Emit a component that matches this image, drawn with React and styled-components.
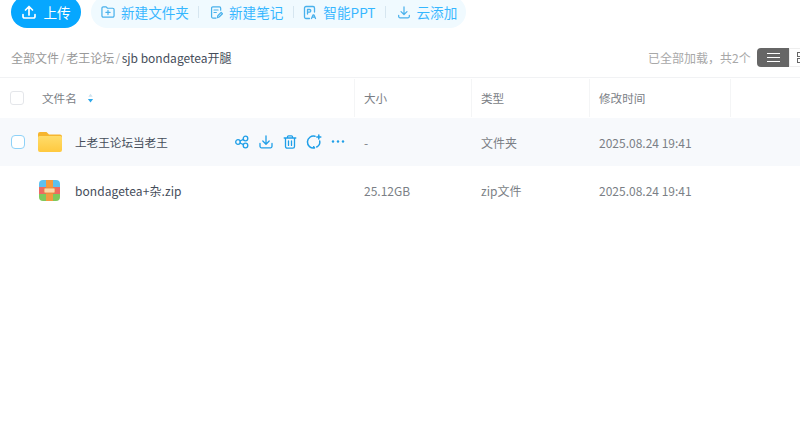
import React from "react";
import styled, { createGlobalStyle } from "styled-components";

const Global = createGlobalStyle`
  html, body { margin: 0; padding: 0; background: #fff; overflow: hidden; }
  body { font-family: "Noto Sans CJK SC", "Noto Sans", sans-serif; }
  #root { width: 800px; height: 427px; overflow: hidden; }
`;

const Page = styled.div`
  width: 800px;
  height: 427px;
  overflow: hidden;
  background: #fff;
`;

const Toolbar = styled.div`
  display: flex;
  align-items: center;
  height: 32px;
  margin-top: -4px;
  padding-left: 11px;
  gap: 10px;
`;

const UploadButton = styled.div`
  display: flex;
  align-items: center;
  justify-content: center;
  gap: 6px;
  width: 70px;
  height: 32px;
  border-radius: 16px;
  background: #06a7ff;
  color: #fff;
  font-size: 13.6px;
  font-weight: 400;
`;

const ActionGroup = styled.div`
  display: flex;
  align-items: center;
  width: 375px;
  height: 32px;
  box-sizing: border-box;
  padding-left: 10px;
  border-radius: 16px;
  background: #f0faff;
`;

const Action = styled.div`
  display: flex;
  align-items: center;
  gap: 6px;
  color: #06a7ff;
  font-size: 13.6px;
  white-space: nowrap;
  opacity: 0.8;
`;

const Sep = styled.span`
  width: 1px;
  height: 12px;
  margin: 0 ${(p) => p.$r}px 0 ${(p) => p.$l}px;
  background: #d6e6f0;
`;

const InfoBar = styled.div`
  display: flex;
  align-items: center;
  justify-content: space-between;
  height: 20px;
  margin-top: 19px;
  padding-left: 11px;
`;

const Crumbs = styled.div`
  display: flex;
  font-size: 12px;
  color: #999;
  white-space: nowrap;
`;

const CrumbSep = styled.span`
  margin: 0 1.5px;
  font-size: 11px;
  color: #aaa;
`;

const CrumbCurrent = styled.span`
  color: #454d5a;
`;

const InfoRight = styled.div`
  display: flex;
  align-items: center;
  flex-shrink: 0;
  width: 152px;
`;

const Loaded = styled.span`
  flex-shrink: 0;
  font-size: 12px;
  color: #a8a8a8;
  width: 109px;
  white-space: nowrap;
`;

const ToggleOn = styled.div`
  display: flex;
  flex-shrink: 0;
  align-items: center;
  justify-content: center;
  width: 32px;
  height: 19px;
  border-radius: 4px 0 0 4px;
  background: #666;
`;

const ToggleOff = styled.div`
  display: flex;
  flex-shrink: 0;
  align-items: center;
  padding-left: 7px;
  width: 10px;
  height: 17px;
  border: 1px solid #eee;
  border-right: 0;
`;

const Table = styled.div`
  margin-top: 10px;
  border-top: 1px solid #f1f2f4;
`;

const cols = "355px 117px 118px 141px 70px";

const HeaderRow = styled.div`
  display: grid;
  grid-template-columns: ${cols};
  height: 40px;
  align-items: stretch;
`;

const Row = styled.div`
  display: grid;
  grid-template-columns: ${cols};
  height: 48px;
  align-items: center;
  background: ${(p) => (p.$active ? "#f7f9fc" : "#fff")};
`;

const HeadCell = styled.div`
  display: flex;
  align-items: center;
  box-sizing: border-box;
  padding: 0 0 1px ${(p) => (p.$first ? 10 : 9)}px;
  font-size: 11.6px;
  color: #7a7e85;
  border-right: ${(p) => (p.$open ? "0" : "1px solid #f4f5f6")};
  margin: 1px 0;
`;

const Cell = styled.div`
  padding-left: 9px;
  font-size: 12px;
  color: #7b7f86;
  white-space: nowrap;
`;

const NameCell = styled.div`
  display: flex;
  align-items: center;
  height: 100%;
  padding-left: 10px;
  font-size: 11.6px;
  color: #454d5a;
  white-space: nowrap;
  position: relative;
`;

const ZipName = styled.span`
  font-size: 12px;
  letter-spacing: 0.08px;
`;

const Check = styled.span`
  display: block;
  flex-shrink: 0;
  width: 12px;
  height: 12px;
  margin: 0 ${(p) => (p.$blue ? -1 : 0)}px 0 ${(p) => (p.$blue ? 1 : 0)}px;
  border-radius: ${(p) => (p.$blue ? 4 : 3)}px;
  border: 1px solid ${(p) => (p.$blue ? "#8fd2f8" : "#e4e6ea")};
  background: #fff;
  visibility: ${(p) => (p.$hidden ? "hidden" : "visible")};
`;

const HeadLabel = styled.span`
  margin-left: 18px;
`;

const Sort = styled.svg`
  margin-left: 10px;
`;

const IconSlot = styled.span`
  display: flex;
  justify-content: center;
  width: 25px;
  margin-left: 13px;
  margin-right: 13px;
`;

const RowActions = styled.div`
  position: absolute;
  left: 234px;
  top: 16px;
  display: flex;
  gap: 8px;
`;

const Up = () => (
  <svg width="16" height="16" viewBox="0 0 16 16" fill="none" stroke="#fff" strokeWidth="1.7" strokeLinecap="round" strokeLinejoin="round">
    <path d="M8 11V2.5M4.5 6 8 2.5 11.5 6M2 10.5v2A1.5 1.5 0 0 0 3.5 14h9a1.5 1.5 0 0 0 1.5-1.5v-2" />
  </svg>
);

const stroke = { fill: "none", stroke: "#1f9fe8", strokeWidth: 1.3, strokeLinecap: "round", strokeLinejoin: "round" };

const NewFolder = () => (
  <svg width="14" height="14" viewBox="0 0 15 14" {...stroke}>
    <path d="M1 3a1.5 1.5 0 0 1 1.5-1.5h3L7 3h5.5A1.5 1.5 0 0 1 14 4.5v6.5a1.5 1.5 0 0 1-1.5 1.5h-10A1.5 1.5 0 0 1 1 11z" />
    <path d="M7.5 5.3v4.4M5.3 7.5h4.4" />
  </svg>
);
const NewNote = () => (
  <svg width="13" height="15" viewBox="0 0 14 15" {...stroke}>
    <path d="M11.5 5V2.8A1.3 1.3 0 0 0 10.2 1.5H3A1.3 1.3 0 0 0 1.7 2.8v9.4A1.3 1.3 0 0 0 3 13.5h3.5" />
    <path d="M4.3 4.8h4.4M4.3 7.5h2.5M8 13l.4-2 3.6-3.6 1.4 1.4-3.6 3.6z" />
  </svg>
);
const Ppt = () => (
  <svg width="14" height="15" viewBox="0 0 14 15" {...stroke}>
    <path d="M6.5 13.5H3A1.5 1.5 0 0 1 1.5 12V3A1.5 1.5 0 0 1 3 1.5h7A1.5 1.5 0 0 1 11.5 3v4" />
    <path d="M4.5 9V4.5h2a1.2 1.2 0 0 1 0 2.6h-2" />
    <path d="M8.5 13.5l1.5-3.5h1l1.5 3.5M9.5 12.2h2.2" />
  </svg>
);
const CloudAdd = () => (
  <svg width="14" height="15" viewBox="0 0 15 15" {...stroke}>
    <path d="M7.5 1.5V9.5M4.3 6.5l3.2 3.2 3.2-3.2M1.8 10.5v1.2a1.5 1.5 0 0 0 1.5 1.5h8.4a1.5 1.5 0 0 0 1.5-1.5v-1.2" />
  </svg>
);

const Share = () => (
  <svg width="16" height="16" viewBox="0 0 16 16" {...stroke}>
    <circle cx="4" cy="8" r="2.3" />
    <circle cx="11.5" cy="4.5" r="2.3" />
    <circle cx="11.5" cy="11.5" r="2.3" />
    <path d="M6 7l3.5-1.6M6 9l3.5 1.6" />
  </svg>
);
const Download = () => (
  <svg width="16" height="16" viewBox="0 0 16 16" {...stroke}>
    <path d="M8 1.8v8M4.8 7 8 10.2 11.2 7M2 9.5v2.8A1.5 1.5 0 0 0 3.5 13.8h9a1.5 1.5 0 0 0 1.5-1.5V9.5" />
  </svg>
);
const Trash = () => (
  <svg width="16" height="16" viewBox="0 0 16 16" {...stroke}>
    <path d="M2.2 4h11.6M5.5 4V2.8a1 1 0 0 1 1-1h3a1 1 0 0 1 1 1V4M3.5 4v8.5a1.7 1.7 0 0 0 1.7 1.7h5.6a1.7 1.7 0 0 0 1.7-1.7V4M6.5 6.8v4.6M9.5 6.8v4.6" />
  </svg>
);
const Chat = () => (
  <svg width="16" height="16" viewBox="0 0 16 16" {...stroke}>
    <path d="M9 2.3A6 6 0 1 0 8.5 14l-.8-1.3M13.7 7a5.6 5.6 0 0 1-3 6" strokeWidth="1.5" />
    <path d="M12.8 1v4M10.8 3h4" strokeWidth="1.5" />
  </svg>
);
const More = () => (
  <svg width="16" height="16" viewBox="0 0 16 16" fill="#1f9fe8">
    <circle cx="3" cy="7.5" r="1.2" />
    <circle cx="8" cy="7.5" r="1.2" />
    <circle cx="13" cy="7.5" r="1.2" />
  </svg>
);

const Folder = () => (
  <svg width="24" height="22" viewBox="0 0 24 22">
    <defs>
      <linearGradient id="folderg" x1="0" y1="0" x2="0" y2="1">
        <stop offset="0" stopColor="#ffdc6a" />
        <stop offset="1" stopColor="#ffc93f" />
      </linearGradient>
    </defs>
    <path d="M0 3a2 2 0 0 1 2-2h6.5L11 3.5h11A2 2 0 0 1 24 5.5V8H0z" fill="#f6b52f" />
    <path d="M0 6.5a1.5 1.5 0 0 1 1.5-1.5h21A1.5 1.5 0 0 1 24 6.5V19a2 2 0 0 1-2 2H2a2 2 0 0 1-2-2z" fill="url(#folderg)" />
  </svg>
);

const Zip = () => (
  <svg width="21" height="21" viewBox="0 0 21 21">
    <defs>
      <clipPath id="zipc"><rect width="21" height="21" rx="4" /></clipPath>
    </defs>
    <g clipPath="url(#zipc)">
      <rect width="21" height="7" fill="#5cc0ef" />
      <rect y="7" width="21" height="7" fill="#ee6a62" />
      <rect y="14" width="21" height="7" fill="#7fc95c" />
      <rect x="7" width="7" height="21" fill="#f39b3f" />
      <rect x="5" y="8" width="11" height="5" rx="1" fill="#fbd9a8" stroke="#e8823a" strokeWidth="0.8" />
    </g>
  </svg>
);

export default function App() {
  return (
    <Page>
      <Global />
      <Toolbar>
        <UploadButton><Up />上传</UploadButton>
        <ActionGroup>
          <Action><NewFolder />新建文件夹</Action>
          <Sep $l={9} $r={11} />
          <Action><NewNote />新建笔记</Action>
          <Sep $l={10} $r={9} />
          <Action><Ppt />智能PPT</Action>
          <Sep $l={9} $r={11} />
          <Action><CloudAdd />云添加</Action>
        </ActionGroup>
      </Toolbar>
      <InfoBar>
        <Crumbs>
          全部文件<CrumbSep>/</CrumbSep>老王论坛<CrumbSep>/</CrumbSep><CrumbCurrent>sjb bondagetea开腿</CrumbCurrent>
        </Crumbs>
        <InfoRight>
          <Loaded>已全部加载，共2个</Loaded>
          <ToggleOn>
            <svg width="13" height="11" viewBox="0 0 13 11" stroke="#fff" strokeWidth="1.2">
              <path d="M0 1.5h13M0 5.5h13M0 9.5h13" />
            </svg>
          </ToggleOn>
          <ToggleOff>
            <svg width="8" height="11" viewBox="0 0 8 11" fill="none" stroke="#666">
              <rect x="0.5" y="0.5" width="5" height="4" />
              <rect x="0.5" y="6.5" width="5" height="4" />
            </svg>
          </ToggleOff>
        </InfoRight>
      </InfoBar>
      <Table>
        <HeaderRow>
          <HeadCell $first>
            <Check />
            <HeadLabel>文件名</HeadLabel>
            <Sort width="7" height="10" viewBox="0 0 8 11">
              <path d="M4 0.5 6.5 4h-5z" fill="#cfe2ee" />
              <path d="M4 10.5 7 6.5H1z" fill="#2ea8ea" />
            </Sort>
          </HeadCell>
          <HeadCell>大小</HeadCell>
          <HeadCell>类型</HeadCell>
          <HeadCell>修改时间</HeadCell>
          <HeadCell $open />
        </HeaderRow>
        <Row $active>
          <NameCell>
            <Check $blue />
            <IconSlot><Folder /></IconSlot>
            上老王论坛当老王
            <RowActions>
              <Share /><Download /><Trash /><Chat /><More />
            </RowActions>
          </NameCell>
          <Cell>-</Cell>
          <Cell>文件夹</Cell>
          <Cell>2025.08.24 19:41</Cell>
        </Row>
        <Row>
          <NameCell>
            <Check $hidden />
            <IconSlot><Zip /></IconSlot>
            <ZipName>bondagetea+杂.zip</ZipName>
          </NameCell>
          <Cell>25.12GB</Cell>
          <Cell>zip文件</Cell>
          <Cell>2025.08.24 19:41</Cell>
        </Row>
      </Table>
    </Page>
  );
}
